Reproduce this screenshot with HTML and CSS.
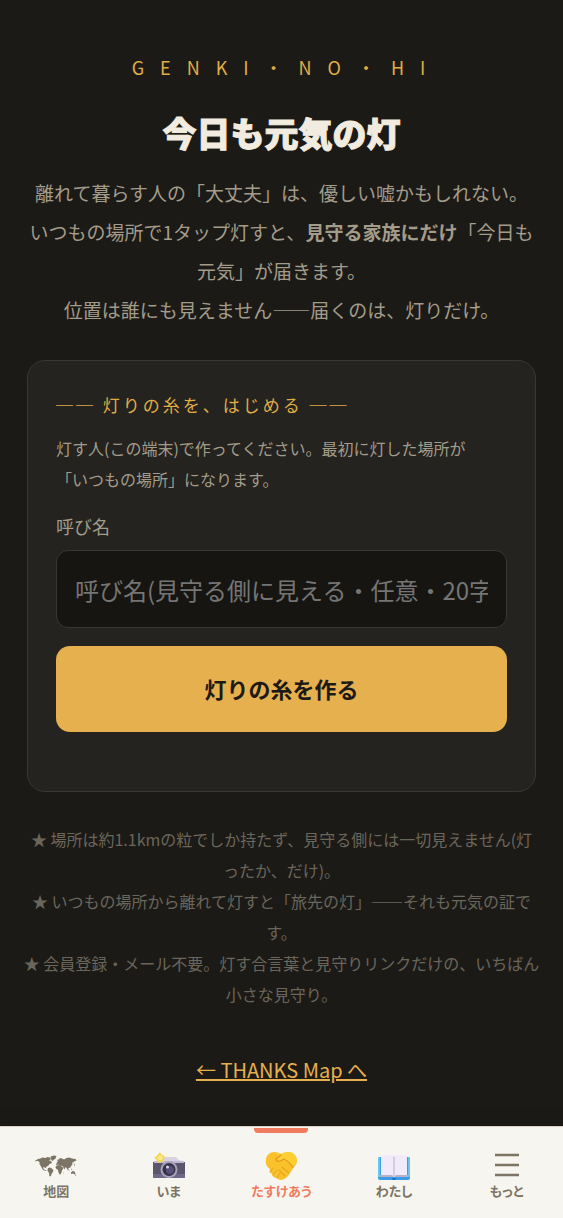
FILE: index.html
```html
<!DOCTYPE html>
<html lang="ja">
<head>
    <meta charset="UTF-8">
    <meta name="viewport" content="width=device-width, initial-scale=1.0">
    <title>今日も元気の灯</title>
    <link rel="stylesheet" href="styles.css">
</head>
<body>

    <main class="page">
        <header class="hero">
            <p class="eyebrow">GENKI・NO・HI</p>
            <h1>今日も元気の灯</h1>
            <p class="lead">離れて暮らす人の「大丈夫」は、優しい嘘かもしれない。<br>いつもの場所で1タップ灯すと、<strong>見守る家族にだけ</strong>「今日も元気」が届きます。<br>位置は誰にも見えません——届くのは、灯りだけ。</p>
        </header>

        <!-- Create form -->
        <form class="card">
            <h2 class="card-title">── 灯りの糸を、はじめる ──</h2>
            <p class="card-text">灯す人(この端末)で作ってください。最初に灯した場所が<br>「いつもの場所」になります。</p>
            <label for="nickname">呼び名</label>
            <input type="text" id="nickname" name="nickname" maxlength="20" placeholder="呼び名(見守る側に見える・任意・20字まで)">
            <button type="button" class="create-btn">灯りの糸を作る</button>
        </form>

        <p class="notes">★ 場所は約1.1kmの粒でしか持たず、見守る側には一切見えません(灯<br>ったか、だけ)。<br>★ いつもの場所から離れて灯すと「旅先の灯」——それも元気の証で<br>す。<br>★ 会員登録・メール不要。灯す合言葉と見守りリンクだけの、いちばん<br>小さな見守り。</p>

        <p class="back"><a href="#">← THANKS Map へ</a></p>
    </main>

    <!-- Bottom tab bar -->
    <nav class="tabbar">
        <a href="#" class="tab">
            <svg class="icon icon-map" viewBox="0 0 84 42" fill="#7c7465">
                <path d="M1 10l5-3 5-1 4-2 6 1 4-2 5 1 2 3-4 3 4 1 2 4-5 2-3 4-3 1-1 3-3-1-3-1 1 4 3 2 3 1-1 1-6-2-4-7-3-5 0-4-3-2-4 0-3 2z"/>
                <path d="M31 2l7-2 5 1-2 5-5 4-2 1-2-4z"/>
                <path d="M26 25l4-1 5 3 2 3-2 4-2 3-1 4-3 1-1-7-3-5z"/>
                <path d="M43 16l2-4 1-3 4-4 4 1 4 2 5-3 6-1 5 2 7 1 2 3-5 2-2 3-2-2 1 5-3 3-1 3-4 1-1 5-3-5-2-2-2 5-3-6-4-2-2 2-3-4-3 1-2 1z"/>
                <path d="M42 21l5-2 5 2 4 3 1 1-3 5-1 4-3 5-3-5-1-5-3-2-2-3z"/>
                <path d="M72 34l3-3 4 1 2 4-2 2-3-2-4 1zM66 26l3 4-1 1zM72 26l3 2-2 1zM56 33l1 3-1 1zM81 38l2 1-3 2zM79 15l1 4-2 3zM43 9l2-1 0 3zM15 22l2 1-1 1z"/>
            </svg>
            <span>地図</span>
        </a>
        <a href="#" class="tab">
            <svg class="icon" viewBox="0 0 32 28">
                <path d="M5 6h6v4H5z" fill="#a99fb5"/>
                <path d="M10 8l2-3h11l3 3 4 1v3H1V9z" fill="#d8d3e2"/>
                <path d="M0 10h32v15a1 1 0 0 1-1 1H1a1 1 0 0 1-1-1z" fill="#5c566d"/>
                <path d="M0 22h32v3a1 1 0 0 1-1 1H1a1 1 0 0 1-1-1z" fill="#716889"/>
                <path d="M1 9h30v2H1z" fill="#c2bace"/>
                <circle cx="16" cy="17.500" r="8.500" fill="#aaa1bb"/>
                <circle cx="16" cy="17.500" r="6.500" fill="#373149"/>
                <circle cx="17" cy="18" r="4" fill="#554f7a"/>
                <circle cx="14.500" cy="15" r="1.500" fill="#d7d3e5"/>
                <path d="M7 0q1 3 5 4-2 3-1 6-3-1-6 1-1-4-4-5 3-2 6-6z" fill="#f5d553"/>
                <path d="M7 3l3 2-1 3-3 0-2-2z" fill="#fae98b"/>
            </svg>
            <span>いま</span>
        </a>
        <a href="#" class="tab active">
            <svg class="icon" viewBox="0 0 32 28">
                <path d="M1 8C1 3 5 0 9 0c3 0 5 1 7 2 2-1 4-2 7-2 5 0 8 3 9 8 0 3-1 5-3 7l-4 6c-2 4-6 7-9 7-2 0-3-1-4-2-3 0-5-2-5-4-2-1-3-3-2-5C2 15 0 12 1 8z" fill="#f9c22b"/>
                <path d="M9 0c3 0 5 1 7 2l-5 5c0 3 5 3 8 0l9 8c2-2 4-4 4-7-1-5-4-8-9-8-4 0-7 2-9 4z" fill="#fccf35"/>
                <path d="M16 3l-5 4c0 3 4 3 8 0 3 1 6 5 9 8" fill="none" stroke="#e3981f" stroke-width="1.200" stroke-linecap="round" stroke-linejoin="round"/>
                <path d="M17 15l7 6M14 18l6 6M8 16l-3 4M12 18l-4 5M15 21l-3 5" fill="none" stroke="#e9a323" stroke-width="1.100" stroke-linecap="round"/>
            </svg>
            <span>たすけあう</span>
        </a>
        <a href="#" class="tab">
            <svg class="icon" viewBox="0 0 32 28">
                <rect x="0" y="5" width="32" height="23" rx="2" fill="#3d9ce8"/>
                <path d="M0 7q0-2 2-2v20H0zM30 5q2 0 2 2v18h-2z" fill="#65c7ef"/>
                <path d="M2 23h28v2H2z" fill="#b6b0c9"/>
                <path d="M3 5q1-2 4-2h6q2 0 3 2 1-2 3-2h6q3 0 4 2v18H18l-2 2-2-2H3z" fill="#f1eafa"/>
                <path d="M15 4l1 1 1-1v20h-2z" fill="#d5cce1"/>
                <path d="M14 26h4l-1 2h-2z" fill="#1f6bb6"/>
            </svg>
            <span>わたし</span>
        </a>
        <a href="#" class="tab">
            <svg class="icon" viewBox="0 0 32 28" stroke="#7c7465" stroke-width="2.500">
                <path d="M4 3h24M4 13h24M4 23h24"/>
            </svg>
            <span>もっと</span>
        </a>
    </nav>

</body>
</html>
```
FILE: styles.css
```css
* {
    box-sizing: border-box;
}
body {
    margin: 0;
    min-height: 100vh;
    display: flex;
    flex-direction: column;
    font-family: "Noto Sans CJK JP", sans-serif;
    background-color: #1c1a17;
    color: #a39c8a;
}
h1, h2, p {
    margin: 0;
}
.page {
    flex: 1;
    padding: 51px 27px 40px;
}
.hero {
    text-align: center;
}
.eyebrow {
    padding-left: 10px;
    font-size: 18px;
    line-height: 32px;
    letter-spacing: 16px;
    color: #e0ad45;
}
h1 {
    margin-top: 24px;
    font-size: 34px;
    line-height: 52px;
    font-weight: 900;
    color: #f2ebdf;
    -webkit-text-stroke: 1px #f2ebdf;
}
.lead {
    margin-top: 14px;
    font-size: 19px;
    line-height: 39px;
}
.card {
    display: flex;
    flex-direction: column;
    margin-top: 31px;
    padding: 28px 28px 59px;
    border: 1px solid #383733;
    border-radius: 18px;
    background-color: #24231f;
}
.card-title {
    font-size: 17px;
    line-height: 32px;
    font-weight: 400;
    letter-spacing: 3px;
    color: #e0ad45;
}
.card-text {
    margin-top: 12px;
    font-size: 16px;
    line-height: 31px;
}
label {
    margin-top: 16px;
    font-size: 18px;
    line-height: 31px;
}
input[type="text"] {
    width: 100%;
    height: 78px;
    margin-top: 8px;
    padding: 0 18px;
    border: 1px solid #383733;
    border-radius: 12px;
    background-color: #161511;
    color: #f2ebdf;
    font-family: inherit;
    font-size: 24px;
}
input::placeholder {
    color: #757575;
}
.create-btn {
    height: 86px;
    margin-top: 18px;
    padding-bottom: 3px;
    border: none;
    border-radius: 14px;
    background-color: #e6b04e;
    color: #1c1a17;
    font-family: inherit;
    font-size: 22px;
    font-weight: 700;
    cursor: pointer;
}
.notes {
    margin: 32px -8px 0;
    font-size: 16px;
    line-height: 31px;
    text-align: center;
    color: #6b665b;
}
.back {
    margin-top: 44px;
    font-size: 20px;
    line-height: 32px;
    text-align: center;
}
.back a {
    color: #e6b04e;
}
.tabbar {
    position: sticky;
    bottom: 0;
    display: grid;
    grid-template-columns: repeat(5, 1fr);
    height: 92px;
    border-top: 1px solid #d8d1c3;
    background-color: #f7f5ef;
    box-shadow: 0 -4px 16px rgba(0, 0, 0, 0.1);
}
.tab {
    position: relative;
    display: flex;
    flex-direction: column;
    align-items: center;
    padding-top: 25px;
    color: #7c7465;
    font-size: 13px;
    line-height: 22px;
    font-weight: 700;
    font-feature-settings: "palt";
    text-decoration: none;
}
.tab.active {
    color: #f07b5f;
}
.tab.active::before {
    content: "";
    position: absolute;
    top: 1px;
    width: 54px;
    height: 5px;
    border-radius: 0 0 4px 4px;
    background-color: #f07b5f;
}
.icon {
    width: 32px;
    height: 28px;
}
.icon-map {
    width: 42px;
}
```
